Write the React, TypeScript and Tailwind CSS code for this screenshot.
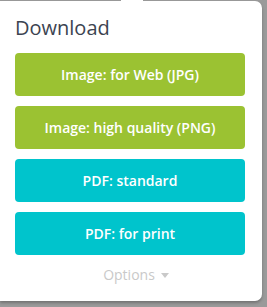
import React from 'react';

const buttons = [
  { label: 'Image: for Web (JPG)', color: 'bg-[#9bc232]' },
  { label: 'Image: high quality (PNG)', color: 'bg-[#9bc232]' },
  { label: 'PDF: standard', color: 'bg-[#00c4cc]' },
  { label: 'PDF: for print', color: 'bg-[#00c4cc]' },
];

export default function App() {
  return (
    <div
      className="w-[267px] h-[307px] bg-[#9a9a9a] overflow-hidden relative"
      style={{ fontFamily: '"Open Sans", sans-serif' }}
    >
      {/* arrow notch */}
      <div className="absolute top-0 left-[121px] w-[22px] h-[2px] bg-white" />
      <div className="mt-px w-[262px] h-[300px] bg-white rounded-r-[7px] shadow-[0_2px_3px_rgba(0,0,0,0.25)] pt-[13px] pl-[15px] pr-[17px]">
        <h2 className="text-[20px] leading-[28px] text-[#3c4451] font-normal">Download</h2>
        <div className="mt-[11px] flex flex-col gap-[10px]">
          {buttons.map((b) => (
            <button
              key={b.label}
              className={`${b.color} h-[43px] w-full rounded-[4px] text-white text-[14px] font-semibold flex items-center justify-center`}
            >
              {b.label}
            </button>
          ))}
        </div>
        <div className="mt-[11px] pl-[12px] flex items-center justify-center gap-[6px] text-[14px] leading-[18px] text-[#c9c9c9]">
          <span>Options</span>
          <svg width="8" height="5" viewBox="0 0 8 5">
            <path d="M0 0 L8 0 L4 5 Z" fill="#c9c9c9" />
          </svg>
        </div>
      </div>
    </div>
  );
}
